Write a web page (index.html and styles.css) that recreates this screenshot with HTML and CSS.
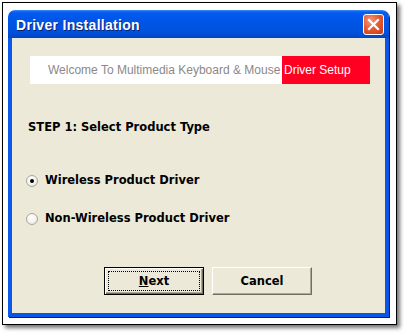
FILE: index.html
```html
<!DOCTYPE html>
<html lang="en">
<head>
  <meta charset="UTF-8" />
  <meta name="viewport" content="width=device-width, initial-scale=1" />
  <title>Driver Installation</title>
  <link rel="stylesheet" href="styles.css">
</head>
<body>
  <div class="frame">
    <div class="window">
      <div class="titlebar">
        <span class="title">Driver Installation</span>
        <span class="close" aria-label="Close">
          <svg width="21" height="21" viewBox="0 0 21 21">
            <path d="M6 6 L15 15 M15 6 L6 15" stroke="#fff" stroke-width="2.2" stroke-linecap="square" fill="none"/>
          </svg>
        </span>
      </div>

      <div class="content">
        <div class="banner">
          <span class="banner-left">Welcome To Multimedia Keyboard &amp; Mouse</span>
          <span class="banner-right">Driver Setup</span>
        </div>

        <p class="step">STEP 1: Select Product Type</p>

        <label class="option">
          <span class="radio checked"></span>
          Wireless Product Driver
        </label>
        <label class="option second">
          <span class="radio"></span>
          Non-Wireless Product Driver
        </label>

        <div class="buttons">
          <button class="btn default"><span class="focus"><u>N</u>ext</span></button>
          <button class="btn">Cancel</button>
        </div>
      </div>
    </div>
  </div>
</body>
</html>
```

FILE: styles.css
```css
/* Reset & base */
* {
  box-sizing: border-box;
}
body {
  margin: 0;
  background: #fff;
  width: 404px;
  height: 333px;
  overflow: hidden;
  font-family: 'DejaVu Sans', Verdana, sans-serif;
}

/* Outer picture frame */
.frame {
  margin: 2px 0 0 2px;
  width: 395px;
  height: 323px;
  border: 1px solid #000;
  box-shadow: 3px 3px 4px rgba(0, 0, 0, 0.55);
  padding: 7px 0 0 5px;
}

/* XP window */
.window {
  width: 381px;
  height: 307px;
  display: flex;
  flex-direction: column;
  border-radius: 7px 7px 0 0;
  box-shadow: 1px 1px 0 #1a1a40;
}
.titlebar {
  height: 28px;
  display: flex;
  align-items: center;
  justify-content: space-between;
  padding: 0 5px 0 8px;
  border-radius: 7px 7px 0 0;
  background: linear-gradient(to bottom, #3d8bf6 0, #0a5ef0 2px, #0058ee 5px, #0055e5 12px, #0051dc 22px, #0147c9 27px, #0a3fb8 28px);
}
.title {
  color: #fff;
  font-family: 'Liberation Sans', Arial, sans-serif;
  font-weight: 700;
  font-size: 14px;
  letter-spacing: 0.3px;
  text-shadow: 1px 1px 0 #0a1f6b;
  margin-top: 1px;
}
.close {
  width: 21px;
  height: 21px;
  border: 1px solid #fff;
  border-radius: 3px;
  background: radial-gradient(circle at 35% 30%, #f29a7a 0, #e4572f 50%, #c8391a 100%);
  display: flex;
  margin-top: 1px;
}
.close svg {
  margin: -1px;
}

/* Dialog body */
.content {
  flex: 1;
  background: #ece9d8;
  border: 4px solid #0a55e8;
  border-top: none;
  border-left-color: #0b58ea;
  padding: 18px 0 0 18px;
  color: #000;
}

.banner {
  display: flex;
  width: 340px;
  height: 28px;
  font-family: 'Liberation Sans', Arial, sans-serif;
  font-size: 12px;
  line-height: 28px;
}
.banner-left {
  width: 252px;
  background: #fff;
  color: #8c8888;
  padding-left: 18px;
  white-space: nowrap;
}
.banner-right {
  flex: 1;
  background: #ff0022;
  color: #fff;
  padding-left: 2px;
}

.step {
  margin: 36px 0 0 -2px;
  font-weight: 700;
  font-size: 11.5px;
  line-height: 14px;
}

.option {
  display: flex;
  align-items: center;
  gap: 7px;
  margin: 39px 0 0 -4px;
  font-weight: 700;
  font-size: 11.5px;
  line-height: 14px;
}
.option.second {
  margin-top: 24px;
}
.radio {
  width: 12px;
  height: 12px;
  border-radius: 50%;
  border: 1px solid #a9a79c;
  background: radial-gradient(circle at 40% 35%, #fff 0, #f4f3ee 55%, #dcd9cc 100%);
  display: flex;
  align-items: center;
  justify-content: center;
  margin-top: 1px;
}
.radio.checked::after {
  content: "";
  width: 4px;
  height: 4px;
  border-radius: 50%;
  background: #000;
}

/* Classic push buttons */
.buttons {
  display: flex;
  gap: 8px;
  margin: 42px 0 0 74px;
}
.btn {
  width: 100px;
  height: 28px;
  padding: 0;
  background: #ece9d8;
  border: 1px solid;
  border-color: #fff #716f64 #716f64 #fff;
  box-shadow: inset -1px -1px 0 #aca899;
  font-family: 'DejaVu Sans', Verdana, sans-serif;
  font-weight: 700;
  font-size: 11.5px;
  color: #000;
}
.btn.default {
  border: 1px solid #000;
  box-shadow: inset 1px 1px 0 #fff, inset -1px -1px 0 #716f64, inset -2px -2px 0 #aca899;
  padding: 3px;
}
.focus {
  display: block;
  height: 100%;
  border: 1px dotted #000;
  line-height: 18px;
}
```
